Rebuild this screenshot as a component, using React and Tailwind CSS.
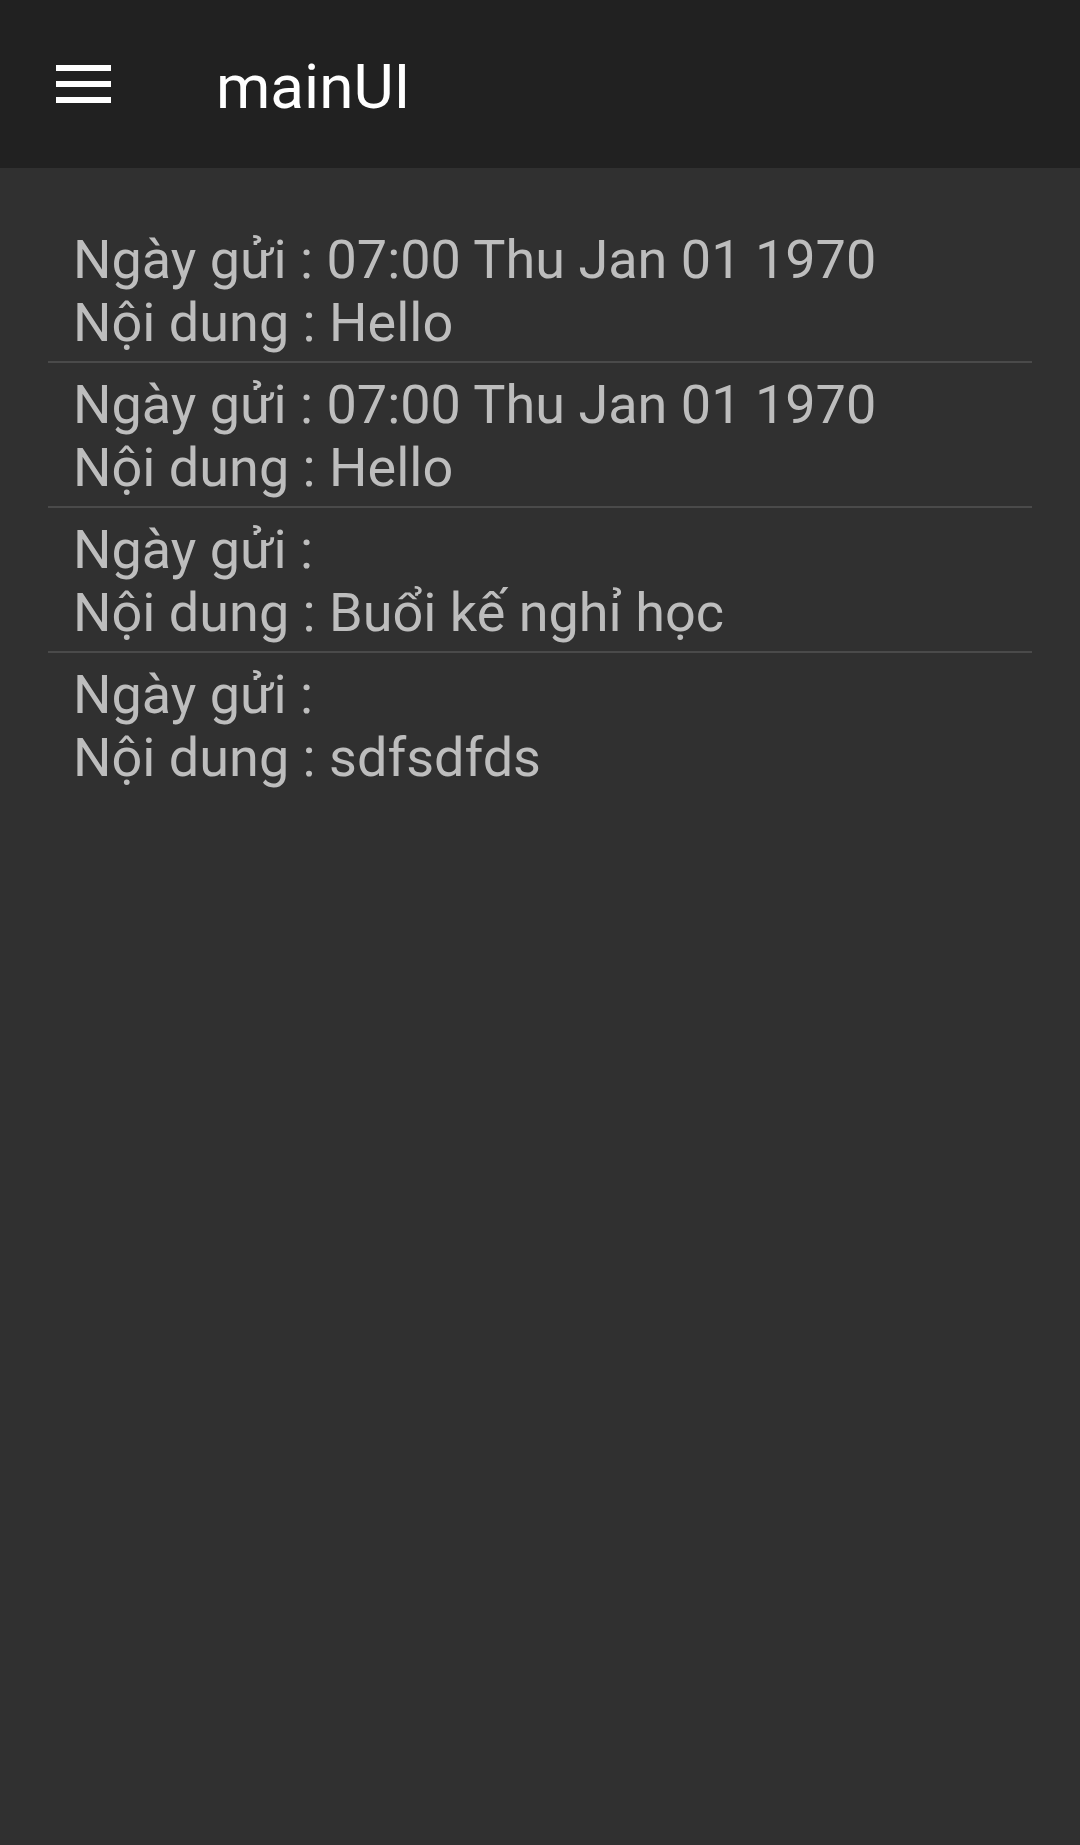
import React from "react";

const messages = [
  { date: "07:00 Thu Jan 01 1970", content: "Hello" },
  { date: "07:00 Thu Jan 01 1970", content: "Hello" },
  { date: "", content: "Buổi kế nghỉ học" },
  { date: "", content: "sdfsdfds" },
];

const App = () => {
  return (
    <div className="min-h-[1845px] bg-[#303030] font-['Roboto',sans-serif]">
      {/* Toolbar */}
      <div className="h-[168px] bg-[#212121] flex items-center">
        <button className="ml-[56px] w-[55px] flex flex-col gap-[10px]">
          <span className="block h-[6px] bg-white" />
          <span className="block h-[6px] bg-white" />
          <span className="block h-[6px] bg-white" />
        </button>
        <h1 className="ml-[105px] mt-[5px] text-[62px] text-white leading-none">mainUI</h1>
      </div>

      {/* Message list */}
      <div className="mx-[48px] mt-[50px]">
        {messages.map((msg, idx) => (
          <div
            key={idx}
            className={
              idx < messages.length - 1
                ? "pl-[25px] pt-[10px] pb-[7px] border-b-2 border-[#4a4a4a]"
                : "pl-[25px] pt-[10px] pb-[7px]"
            }
          >
            <p className="text-[54px] leading-[63px] text-[#bdbdbd]">
              Ngày gửi : {msg.date}
            </p>
            <p className="text-[54px] leading-[63px] text-[#bdbdbd]">
              Nội dung : {msg.content}
            </p>
          </div>
        ))}
      </div>
    </div>
  );
};

export default App;
